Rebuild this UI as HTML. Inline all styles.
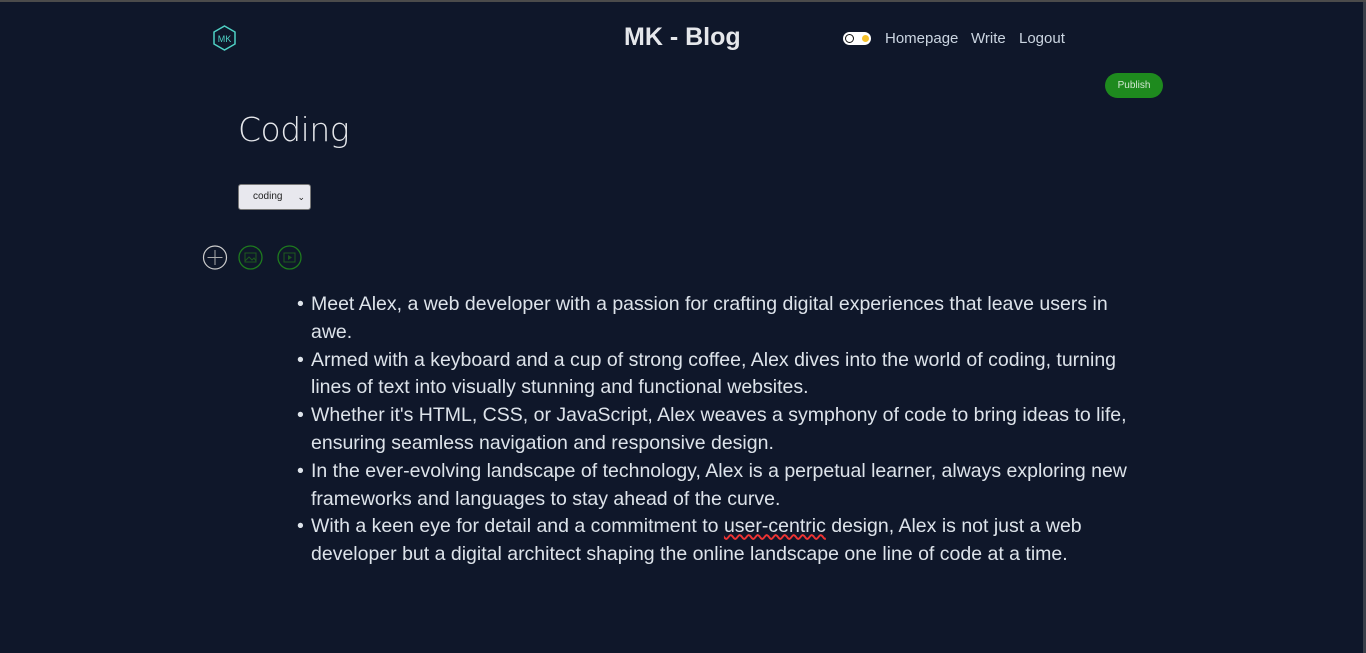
<!DOCTYPE html>
<html><head><meta charset="utf-8"><style>
body{margin:0;width:1366px;height:653px;background:#0f172a;overflow:hidden;font-family:"Liberation Sans",sans-serif;color:#e2e8f0;position:relative;border-top:2px solid #4b4b4b;box-sizing:border-box}
.a{position:absolute}
</style></head><body>
<svg class="a" style="left:212px;top:23px" width="25" height="26" viewBox="0 0 25 26"><polygon points="12.5,1 23,7 23,19 12.5,25 2,19 2,7" fill="none" stroke="#4fd1c5" stroke-width="1.5"/><text x="12.5" y="17" font-size="9" fill="#4fd1c5" text-anchor="middle" font-family="Liberation Sans">MK</text></svg>
<div class="a" style="left:624px;top:21px;font-size:25px;font-weight:bold;color:#e5e7eb">MK - Blog</div>
<div class="a" style="left:843px;top:30px;width:28px;height:13px;border-radius:7px;background:#fff"></div>
<div class="a" style="left:845px;top:32px;width:7px;height:7px;border-radius:50%;border:1.5px solid #111"></div>
<div class="a" style="left:862px;top:33px;width:7px;height:7px;border-radius:50%;background:#f6c12b"></div>
<div class="a" style="left:885px;top:28px;font-size:15px;color:#cbd5e1">Homepage</div>
<div class="a" style="left:971px;top:28px;font-size:15px;color:#cbd5e1">Write</div>
<div class="a" style="left:1019px;top:28px;font-size:15px;color:#cbd5e1">Logout</div>
<div class="a" style="left:1105px;top:71px;width:58px;height:25px;border-radius:13px;background:#1e8a1e;color:#d1e7d1;font-size:10px;text-align:center;line-height:25px">Publish</div>
<div class="a" style="left:238px;top:108px;font-size:33px;font-family:'DejaVu Sans',sans-serif;font-weight:300;color:#e5e7eb;letter-spacing:-0.5px">Coding</div>
<div class="a" style="left:238px;top:182px;width:71px;height:24px;background:#e8e8ee;border:1px solid #777;border-radius:3px;color:#222;font-size:10px;line-height:24px"><span style="margin-left:14px">coding</span><span style="position:absolute;right:5px;top:0;font-size:9px">&#8964;</span></div>
<svg class="a" style="left:202px;top:242px" width="105" height="28"><circle cx="13" cy="13.5" r="11.5" fill="none" stroke="#ccc" stroke-width="1.2"/><path d="M13 6v15M5.5 13.5h15" stroke="#aaa" stroke-width="1"/><circle cx="48.5" cy="13.5" r="11.5" fill="none" stroke="#1e7a1e" stroke-width="1.3"/><rect x="43" y="9" width="11" height="9" fill="none" stroke="#1e5a1e"/><path d="M43 17l4-4 3 3 2-2 2 3" fill="none" stroke="#1e5a1e"/><circle cx="87.5" cy="13.5" r="11.5" fill="none" stroke="#1e7a1e" stroke-width="1.3"/><rect x="82" y="9" width="11" height="9" fill="none" stroke="#1e5a1e"/><path d="M86 11l4 2.5-4 2.5z" fill="#1e5a1e"/></svg>
<div class="a" style="left:297px;top:289px;width:840px;font-size:19.5px;line-height:27.8px;color:#dde3ea">
<div style="padding-left:14px;position:relative"><span style="position:absolute;left:0">•</span>Meet Alex, a web developer with a passion for crafting digital experiences that leave users in awe.</div>
<div style="padding-left:14px;position:relative"><span style="position:absolute;left:0">•</span>Armed with a keyboard and a cup of strong coffee, Alex dives into the world of coding, turning lines of text into visually stunning and functional websites.</div>
<div style="padding-left:14px;position:relative"><span style="position:absolute;left:0">•</span>Whether it's HTML, CSS, or JavaScript, Alex weaves a symphony of code to bring ideas to life, ensuring seamless navigation and responsive design.</div>
<div style="padding-left:14px;position:relative"><span style="position:absolute;left:0">•</span>In the ever-evolving landscape of technology, Alex is a perpetual learner, always exploring new frameworks and languages to stay ahead of the curve.</div>
<div style="padding-left:14px;position:relative"><span style="position:absolute;left:0">•</span>With a keen eye for detail and a commitment to <span style="text-decoration:underline wavy #e33">user-centric</span> design, Alex is not just a web developer but a digital architect shaping the online landscape one line of code at a time.</div>
</div>
<div class="a" style="right:0;top:0;width:3px;height:651px;background:#3a3f4a"></div>
</body></html>
